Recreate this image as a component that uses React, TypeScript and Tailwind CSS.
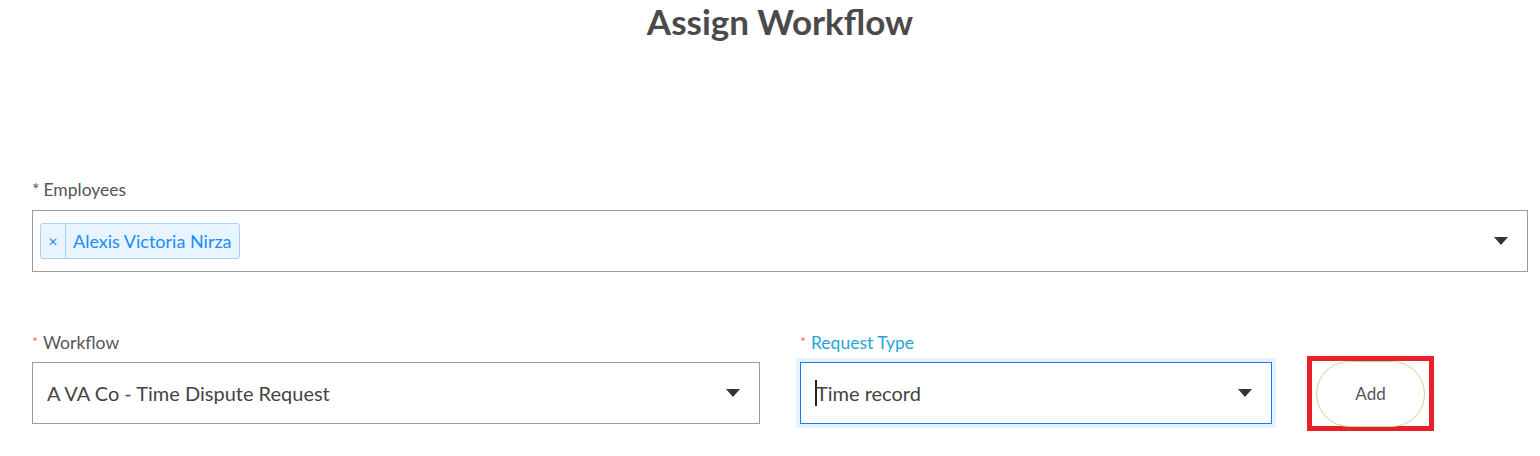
import React from 'react';

function Caret() {
  return (
    <svg width="14" height="8" viewBox="0 0 14 8" className="shrink-0">
      <path d="M0 0 L14 0 L7 8 Z" fill="#333" />
    </svg>
  );
}

function Label({ text, required, active }: { text: string; required?: 'red' | 'gray'; active?: boolean }) {
  return (
    <div className={`h-[22px] flex items-center text-[17.5px] ${active ? 'text-[#2aa3d8]' : 'text-[#555]'}`}>
      {required === 'red' && <span className="text-[#ff6b6b] text-[14px] mr-[5px] -mt-[4px]">*</span>}
      {required === 'gray' && <span className="mr-[4px]">*</span>}
      {text}
    </div>
  );
}

export default function App() {
  return (
    <div className="w-[1540px] h-[456px] bg-white overflow-hidden" style={{ fontFamily: "'Source Sans Pro', Lato, 'Liberation Sans', sans-serif" }}>
      <div className="pl-[32px] pr-[12px]">
        {/* Title */}
        <h1 className="text-center text-[35px] font-bold text-[#4a4a4a] leading-[42px]">Assign Workflow</h1>

        {/* Employees */}
        <div className="mt-[137px]">
          <Label text="Employees" required="gray" />
          <div className="mt-[9px] h-[62px] border border-[#9b9b9b] flex items-center pl-[7px] pr-[19px]">
            <div className="h-[36px] flex items-stretch border border-[#a9d3ff] bg-[#e8f4ff] rounded-[3px] text-[#1a8cff]">
              <span className="w-[25px] flex items-center justify-center border-r border-[#a9d3ff] text-[16px]">×</span>
              <span className="flex items-center px-[7px] text-[18px]">Alexis Victoria Nirza</span>
            </div>
            <div className="flex-1" />
            <Caret />
          </div>
        </div>

        {/* Workflow row */}
        <div className="mt-[60px] flex items-start">
          <div className="w-[728px]">
            <Label text="Workflow" required="red" />
            <div className="mt-[8px] h-[62px] border border-[#9b9b9b] flex items-center pl-[14px] pr-[19px] text-[20px] text-[#444]">
              <span className="flex-1">A VA Co - Time Dispute Request</span>
              <Caret />
            </div>
          </div>

          <div className="w-[472px] ml-[40px]">
            <Label text="Request Type" required="red" active />
            <div className="mt-[8px] h-[62px] border border-[#1677ff] shadow-[0_0_0_4px_#e6f3ff] flex items-center pl-[14px] pr-[19px] text-[20px] text-[#444]">
              <span className="w-[2px] h-[26px] bg-[#222] mr-[-1px]" />
              <span className="flex-1">Time record</span>
              <Caret />
            </div>
          </div>

          <div className="ml-[35px] mt-[24px] w-[127px] h-[75px] border-[5px] border-[#e8202a] flex items-center justify-center">
            <div className="w-[109px] h-[66px] rounded-full border border-[#b8e08c] flex items-center justify-center text-[17px] text-[#555]">
              Add
            </div>
          </div>
        </div>
      </div>
    </div>
  );
}
